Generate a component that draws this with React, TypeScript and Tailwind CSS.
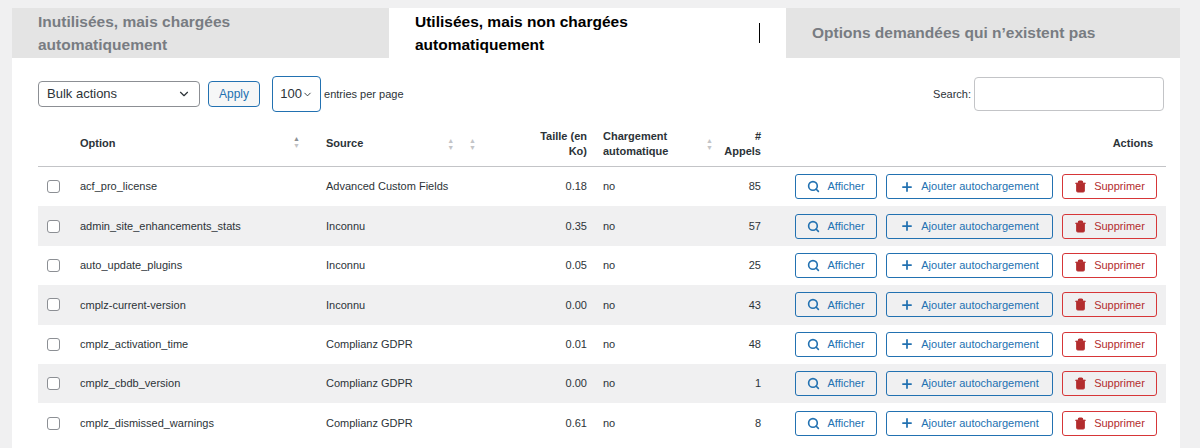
import React from 'react';
import { Search, Plus, Trash2, ChevronDown } from 'lucide-react';

const rows = [
    ['acf_pro_license', 'Advanced Custom Fields', '0.18', '85'],
    ['admin_site_enhancements_stats', 'Inconnu', '0.35', '57'],
    ['auto_update_plugins', 'Inconnu', '0.05', '25'],
    ['cmplz-current-version', 'Inconnu', '0.00', '43'],
    ['cmplz_activation_time', 'Complianz GDPR', '0.01', '48'],
    ['cmplz_cbdb_version', 'Complianz GDPR', '0.00', '1'],
    ['cmplz_dismissed_warnings', 'Complianz GDPR', '0.61', '8'],
];

const Sort = ({ up }: { up?: boolean }) => (
    <span className="flex flex-col text-[7px] leading-[7px] text-[#c3c4c7]">
        <span className={up ? 'text-[#8c8f94]' : ''}>▲</span>
        <span>▼</span>
    </span>
);

const App: React.FC = () => {
    return (
        <div className="w-[1200px] h-[448px] overflow-hidden bg-[#f0f0f1] pt-2 pl-3 text-[#2c3338]" style={{ fontFamily: '"Liberation Sans", Arial, sans-serif' }}>
            <div className="w-[1168px]">
                {/* tabs */}
                <div className="flex h-[50px] text-[15.5px] font-bold">
                    <div className="w-[377px] bg-[#e4e4e4] text-[#787c82] flex items-center px-[26px]">Inutilisées, mais chargées automatiquement</div>
                    <div className="w-[397px] bg-white text-black flex items-center px-[26px]">Utilisées, mais non chargées automatiquement<span className="ml-px w-px h-5 bg-black" /></div>
                    <div className="flex-1 bg-[#e4e4e4] text-[#787c82] flex items-center px-[26px]">Options demandées qui n’existent pas</div>
                </div>
                <div className="bg-white pl-[26px] pr-[14px] pt-[18px] h-[400px]">
                    {/* toolbar */}
                    <div className="flex items-center text-[13px]">
                        <div className="w-[162px] h-[26px] border border-[#8c8f94] rounded flex items-center justify-between px-2 text-[13px]">
                            Bulk actions <ChevronDown size={14} />
                        </div>
                        <div className="ml-[8px] h-[26px] px-[10px] border border-[#2271b1] rounded text-[#2271b1] bg-[#f6f7f7] flex items-center text-[12px]">Apply</div>
                        <div className="ml-[12px] w-[49px] h-[36px] border border-[#2271b1] rounded flex items-center justify-center text-[13px]">100<ChevronDown size={11} /></div>
                        <span className="ml-[3px] text-[11px]">entries per page</span>
                        <span className="ml-auto text-[11px] mr-[3px]">Search:</span>
                        <div className="w-[190px] h-[34px] border border-[#c3c4c7] rounded mr-[2px]" />
                    </div>
                    {/* table */}
                    <div className="mt-[9px] text-[11px]">
                        <div className="flex items-center h-[46px] border-b border-[#c3c4c7] font-bold">
                            <div className="w-[42px]" />
                            <div className="w-[222px] flex justify-between pr-[2px]">Option <Sort up /></div>
                            <div className="w-[24px]" />
                            <div className="w-[180px] flex items-center pr-[30px]">Source<span className="ml-auto flex gap-[15px]"><Sort /><Sort /></span></div>
                            <div className="w-[81px] text-right leading-[15px]">Taille (en<br />Ko)</div>
                            <div className="w-[16px]" />
                            <div className="w-[110px] flex items-center leading-[15px]"><span>Chargement<br />automatique</span><span className="ml-auto"><Sort /></span></div>
                            <div className="w-[48px] text-right leading-[15px]">#<br />Appels</div>
                            <div className="flex-1 text-right pr-[13px]">Actions</div>
                        </div>
                        {rows.map((r, i) => (
                            <div key={r[0]} className={`flex items-center h-[39.4px] ${i % 2 ? 'bg-[#f0f0f1]' : 'bg-white'}`}>
                                <div className="w-[42px] pl-[9px]"><div className="w-[13px] h-[13px] border border-[#8c8f94] rounded-[3px] bg-white" /></div>
                                <div className="w-[246px]">{r[0]}</div>
                                <div className="w-[180px]">{r[1]}</div>
                                <div className="w-[81px] text-right">{r[2]}</div>
                                <div className="w-[16px]" />
                                <div className="w-[110px]">no</div>
                                <div className="w-[48px] text-right">{r[3]}</div>
                                <div className="flex-1 flex justify-end gap-[9px] pr-[9px]">
                                    <div className="h-[25px] w-[82px] border border-[#2271b1] rounded-[3px] text-[#2271b1] flex items-center justify-center gap-[7px]"><Search size={13} strokeWidth={3} />Afficher</div>
                                    <div className="h-[25px] w-[167px] border border-[#2271b1] rounded-[3px] text-[#2271b1] flex items-center justify-center gap-[7px]"><Plus size={14} strokeWidth={3} />Ajouter autochargement</div>
                                    <div className="h-[25px] w-[95px] border border-[#d63638] rounded-[3px] text-[#b32d2e] flex items-center justify-center gap-[7px]"><Trash2 size={13} fill="#b32d2e" strokeWidth={2} />Supprimer</div>
                                </div>
                            </div>
                        ))}
                    </div>
                </div>
            </div>
        </div>
    );
};

export default App;
